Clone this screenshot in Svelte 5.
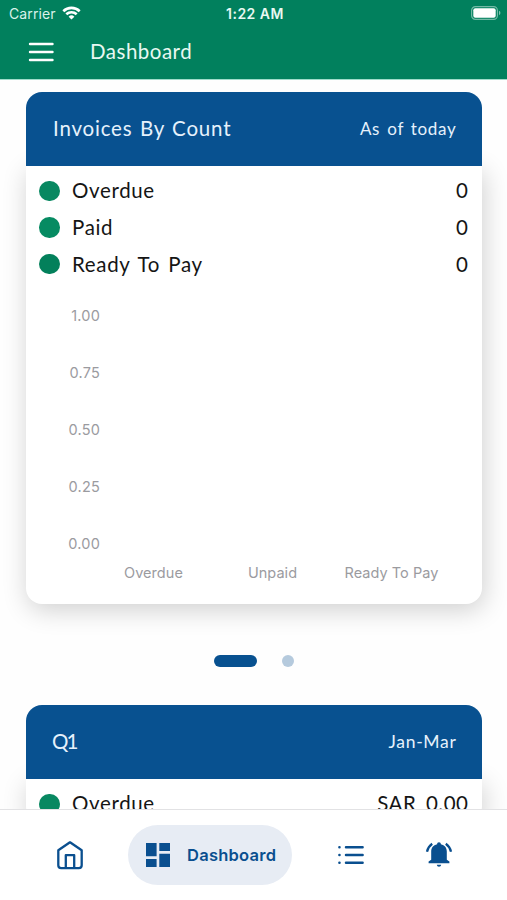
<script lang="ts">
	type Row = { label: string; value: string; color: string };

	const counts: Row[] = [
		{ label: 'Overdue', value: '0', color: '#088861' },
		{ label: 'Paid', value: '0', color: '#068b62' },
		{ label: 'Ready To Pay', value: '0', color: '#03805b' }
	];

	const quarter: Row[] = [{ label: 'Overdue', value: 'SAR 0.00', color: '#088861' }];

	const ticks = ['1.00', '0.75', '0.50', '0.25', '0.00'];
	const categories = ['Overdue', 'Unpaid', 'Ready To Pay'];

	let slide = $state(0);
</script>

{#snippet rows(items: Row[])}
	<ul class="rows">
		{#each items as item}
			<li>
				<span class="dot" style="background: {item.color}"></span>
				<span class="label">{item.label}</span>
				<span class="value">{item.value}</span>
			</li>
		{/each}
	</ul>
{/snippet}

<div class="screen">
	<header>
		<div class="status">
			<div class="carrier">
				<span>Carrier</span>
				<svg width="19" height="14" viewBox="0 0 19 14" fill="none" stroke="#fff" stroke-width="2.6">
					<path d="M1.3 5.2a11.8 11.8 0 0 1 16.4 0" />
					<path d="M4.3 8.3a7.5 7.5 0 0 1 10.4 0" />
					<path d="M9.5 13.6 6.6 10.7a4.2 4.2 0 0 1 5.8 0z" fill="#fff" stroke="none" />
				</svg>
			</div>
			<span class="time">1:22 AM</span>
			<svg class="battery" width="30" height="14" viewBox="0 0 30 14">
				<rect x="0.6" y="0.6" width="25.8" height="12.8" rx="3.8" fill="none" stroke="#fff" stroke-opacity="0.45" stroke-width="1.2" />
				<rect x="2.3" y="2.3" width="22.4" height="9.4" rx="2" fill="#fff" />
				<path d="M28 4.8a2.4 2.4 0 0 1 0 4.4z" fill="#fff" fill-opacity="0.5" />
			</svg>
		</div>
		<div class="toolbar">
			<button class="menu" aria-label="Menu">
				<svg width="26" height="20" viewBox="0 0 26 20" stroke="#fff" stroke-width="2.4" stroke-linecap="round">
					<path d="M2 2h22.500M2 10h22.500M2 18h22.500" />
				</svg>
			</button>
			<h1>Dashboard</h1>
		</div>
	</header>

	<main>
		<section class="card">
			<div class="card-head">
				<h2 class="wide">Invoices By Count</h2>
				<p class="asof">As of today</p>
			</div>
			<div class="card-body">
				{@render rows(counts)}
				<div class="chart">
					<div class="ticks">
						{#each ticks as tick}
							<span>{tick}</span>
						{/each}
					</div>
					<div class="categories">
						{#each categories as category}
							<span>{category}</span>
						{/each}
					</div>
				</div>
			</div>
		</section>

		<div class="pager">
			{#each [0, 1] as i}
				<button class:active={slide === i} aria-label="Slide {i + 1}" onclick={() => (slide = i)}></button>
			{/each}
		</div>

		<section class="card">
			<div class="card-head">
				<h2 class="quarter">Q1</h2>
				<p class="months">Jan-Mar</p>
			</div>
			<div class="card-body">
				{@render rows(quarter)}
			</div>
		</section>
	</main>

	<nav>
		<a href="#home" aria-label="Home">
			<svg width="28" height="30" viewBox="0 0 28 30" fill="none" stroke="#0a4f8f" stroke-width="2.300" stroke-linejoin="round">
				<path d="M14 2.300 2.300 10.300v15q0 2.900 2.900 2.900h17.600q2.900 0 2.900-2.900v-15z" />
				<path d="M9.800 28V15.200h8.400V28" />
			</svg>
		</a>
		<a href="#dashboard" class="current">
			<svg width="24" height="24" viewBox="0 0 24 24" fill="#0a4f8f">
				<path d="M0 0h10.600v13.200H0zM13.300 0H24v8H13.300zM0 16h10.600v8H0zM13.300 10.800H24V24H13.300z" />
			</svg>
			<span>Dashboard</span>
		</a>
		<a href="#list" class="list" aria-label="List">
			<svg width="26" height="20" viewBox="0 0 26 20" fill="none" stroke="#0a4f8f" stroke-width="2.500" stroke-linecap="round">
				<path d="M8 2.200h16.600M8 10h16.600M8 17.700h16.600M1.400 2.200h.1M1.400 10h.1M1.400 17.700h.1" />
			</svg>
		</a>
		<a href="#alerts" aria-label="Alerts">
			<svg width="28" height="26" viewBox="0 0 28 26" fill="#0a4f8f">
				<path d="M14 .3c-1.200 0-1.900.8-1.900 1.900C8.300 3 6.200 5.800 6.200 9.500v8.300L3.600 19.500v1.800h20.800v-1.800l-2.600-1.700V9.500c0-3.700-2.100-6.500-5.900-7.300 0-1.100-.7-1.900-1.900-1.900z" />
				<path d="M11.800 22.800h4.400c-.2 1.300-1 1.900-2.200 1.900s-2-.6-2.200-1.900z" />
				<path d="M7.200 1.800Q3.200 4.600 2 9.700M20.800 1.800Q24.800 4.600 26 9.700" fill="none" stroke="#0a4f8f" stroke-width="2.300" />
			</svg>
		</a>
	</nav>
</div>

<style>
	:global(body) {
		margin: 0;
		background: #fefefe;
	}

	.screen {
		display: flex;
		flex-direction: column;
		height: 900px;
		overflow: hidden;
		background: #fefefe;
		font-family: Lato, 'Open Sans', sans-serif;
	}

	h1,
	h2,
	p,
	ul {
		margin: 0;
		padding: 0;
		font-weight: 400;
	}

	button {
		padding: 0;
		border: 0;
		background: none;
	}

	svg {
		display: block;
	}

	header {
		flex: none;
		box-sizing: border-box;
		height: 80px;
		background: #01805d;
		border-bottom: 1px solid #9fdcca;
		color: #e8f8f2;
	}

	.status {
		display: grid;
		grid-template-columns: 1fr auto 1fr;
		align-items: center;
		height: 27px;
		padding: 0 6px 0 9px;
		font-family: Inter, sans-serif;
		font-size: 14px;
	}

	.carrier {
		display: flex;
		align-items: center;
		gap: 6px;
		color: #d9f2ea;
		letter-spacing: 0.1px;
	}

	.carrier svg {
		margin-top: -2px;
	}

	.time {
		font-size: 14px;
		font-weight: 600;
		letter-spacing: 0.5px;
	}

	.battery {
		justify-self: end;
		margin-top: -1px;
	}

	.toolbar {
		display: flex;
		align-items: center;
		height: 50px;
		padding-left: 28px;
	}

	.toolbar h1 {
		margin: -2px 0 0 36px;
		font-size: 20.5px;
		letter-spacing: 0.5px;
	}

	main {
		flex: 1;
		min-height: 0;
		padding: 12px 25.5px 0 26px;
		overflow: hidden;
	}

	.card-head {
		position: relative;
		z-index: 1;
		display: flex;
		align-items: center;
		justify-content: space-between;
		box-sizing: border-box;
		height: 74px;
		padding: 0 25px 2px 26px;
		border-radius: 16px 16px 0 0;
		background: #085190;
		color: #e6f1fc;
	}

	.card-head h2 {
		font-size: 20.5px;
	}

	.card-head .wide {
		padding-left: 1px;
		letter-spacing: 0.8px;
		word-spacing: 1.5px;
	}

	.card-head .quarter {
		letter-spacing: -2px;
	}

	.card-head p {
		font-size: 17.5px;
		letter-spacing: 0.7px;
	}

	.card-head .asof {
		font-size: 17px;
		word-spacing: 2px;
	}

	.card-body {
		box-sizing: border-box;
		padding: 6px 13px 0;
		border-radius: 0 0 16px 16px;
		background: #fff;
		box-shadow: 2px 6px 26px rgba(0, 0, 0, 0.19);
	}

	.card:first-child .card-body {
		height: 438px;
	}

	.rows {
		list-style: none;
		font-size: 20.5px;
		color: #151515;
	}

	.rows li {
		display: flex;
		align-items: center;
		height: 36.7px;
	}

	.dot {
		width: 20.5px;
		height: 20.5px;
		margin: 1px 12.5px 0 0;
		border-radius: 50%;
	}

	.label {
		flex: 1;
		letter-spacing: 0.65px;
		word-spacing: 2.3px;
	}

	.value {
		letter-spacing: 0.5px;
		word-spacing: 4px;
	}

	.chart {
		padding-top: 24px;
		font-family: Inter, sans-serif;
		font-size: 14.5px;
		color: #9b9b9f;
	}

	.ticks {
		display: flex;
		flex-direction: column;
		justify-content: space-between;
		width: 61px;
		height: 248px;
		letter-spacing: 0.2px;
		line-height: 20px;
		text-align: right;
	}

	.categories {
		display: grid;
		grid-template-columns: repeat(3, 119px);
		padding: 9px 0 0 55px;
		letter-spacing: 0.05px;
		line-height: 20px;
		text-align: center;
	}

	.pager {
		display: flex;
		align-items: center;
		justify-content: center;
		gap: 25px;
		height: 101px;
	}

	.pager button {
		width: 12.5px;
		height: 12.5px;
		margin-top: 13px;
		border-radius: 7px;
		background: #b5cadd;
	}

	.pager .active {
		width: 43px;
		background: #085190;
	}

	nav {
		position: relative;
		z-index: 2;
		flex: none;
		display: flex;
		align-items: center;
		box-sizing: border-box;
		height: 91px;
		padding-left: 56px;
		border-top: 1px solid #e2e2e4;
		background: #fff;
		color: #0a4f8f;
		font-family: Inter, sans-serif;
	}

	.current {
		display: flex;
		align-items: center;
		box-sizing: border-box;
		width: 164px;
		height: 60px;
		margin: 0 46px 0 44px;
		padding-left: 18px;
		border-radius: 30px;
		background: #e7ecf4;
		color: inherit;
		font-size: 16.5px;
		font-weight: 600;
		text-decoration: none;
	}

	.current span {
		margin: -1px 0 0 17px;
		letter-spacing: 0.25px;
	}

	.list {
		margin-right: 61px;
	}
</style>
